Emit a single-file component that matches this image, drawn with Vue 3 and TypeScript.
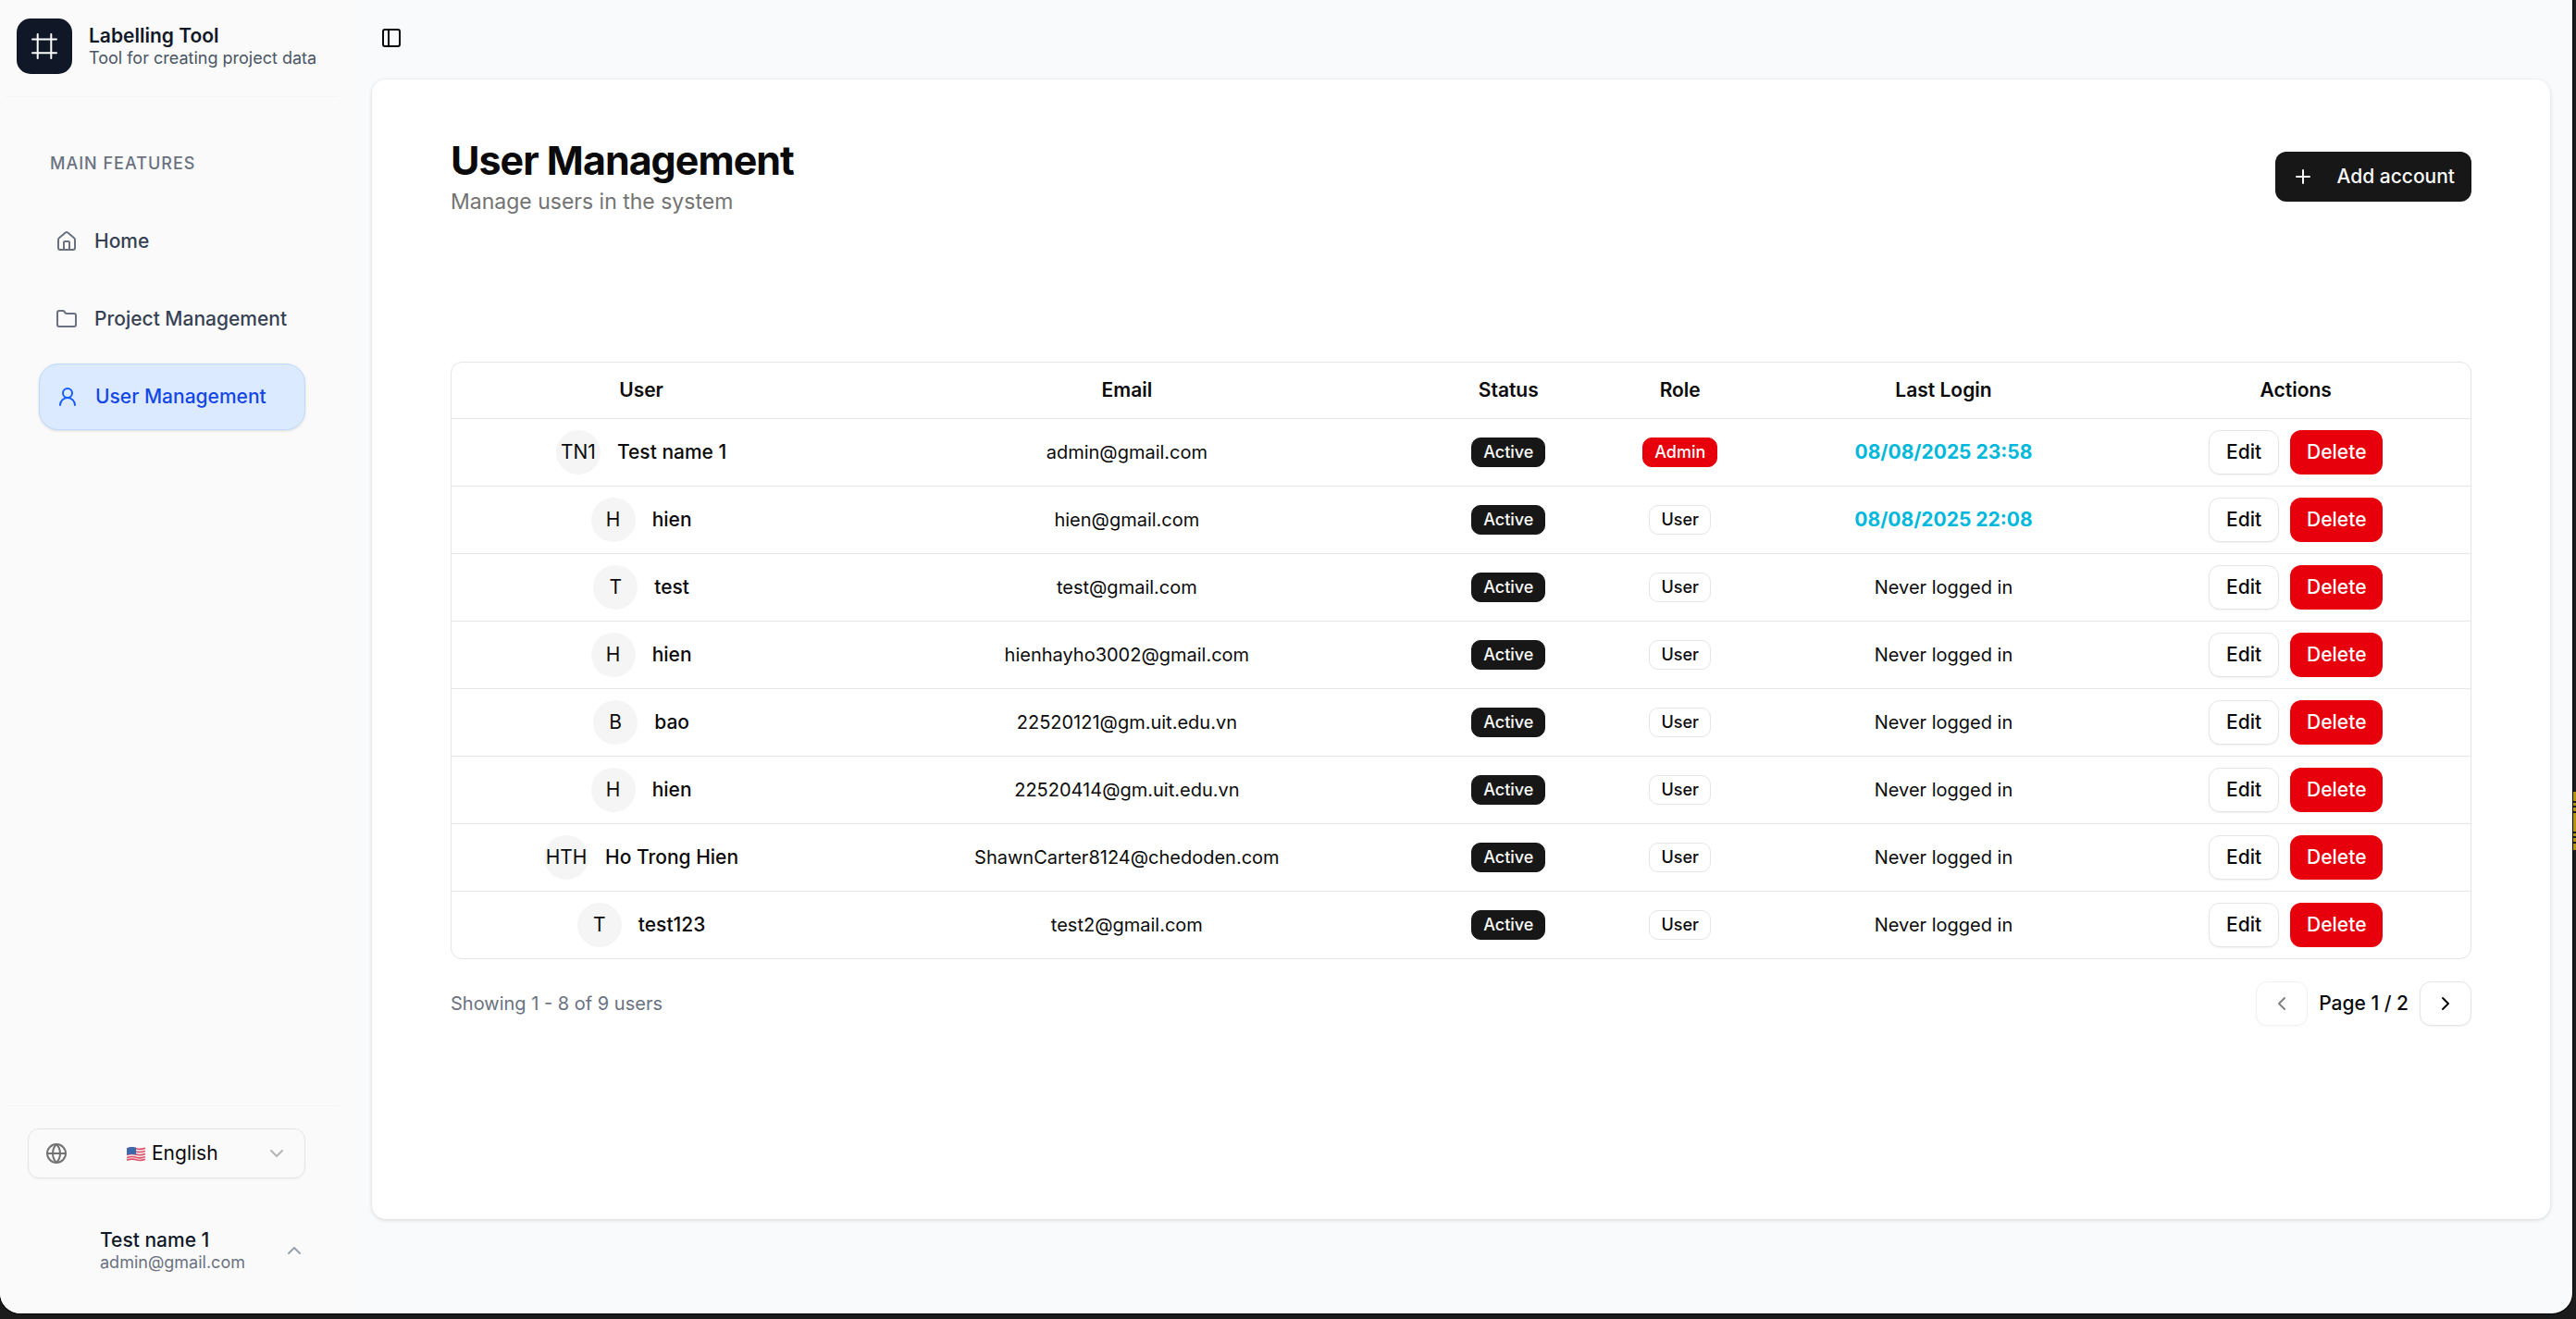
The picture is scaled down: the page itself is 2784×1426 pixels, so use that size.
<script setup lang="ts">
import { ref } from 'vue'

interface User {
  initials: string
  name: string
  email: string
  role: 'Admin' | 'User'
  lastLogin?: string
}

const users: User[] = [
  { initials: 'TN1', name: 'Test name 1', email: 'admin@gmail.com', role: 'Admin', lastLogin: '08/08/2025 23:58' },
  { initials: 'H', name: 'hien', email: 'hien@gmail.com', role: 'User', lastLogin: '08/08/2025 22:08' },
  { initials: 'T', name: 'test', email: 'test@gmail.com', role: 'User' },
  { initials: 'H', name: 'hien', email: 'hienhayho3002@gmail.com', role: 'User' },
  { initials: 'B', name: 'bao', email: '22520121@gm.uit.edu.vn', role: 'User' },
  { initials: 'H', name: 'hien', email: '22520414@gm.uit.edu.vn', role: 'User' },
  { initials: 'HTH', name: 'Ho Trong Hien', email: 'ShawnCarter8124@chedoden.com', role: 'User' },
  { initials: 'T', name: 'test123', email: 'test2@gmail.com', role: 'User' },
]

const columns = [
  { key: 'user', label: 'User' },
  { key: 'email', label: 'Email' },
  { key: 'status', label: 'Status' },
  { key: 'role', label: 'Role' },
  { key: 'login', label: 'Last Login' },
  { key: 'actions', label: 'Actions' },
]

const language = ref('en')
</script>

<template>
  <div class="desktop">
    <div class="edge-marks" aria-hidden="true"></div>
    <div class="window">
      <aside class="sidebar">
        <header class="brand">
          <span class="logo">
            <svg viewBox="0 0 30 30" width="30" height="30" fill="none" stroke="currentColor" stroke-width="2" stroke-linecap="round">
              <path d="M7.700 2v26M22.300 2v26M2 7.500h26M2 22.300h26" />
            </svg>
          </span>
          <div>
            <p class="brand-name">Labelling Tool</p>
            <p class="brand-sub">Tool for creating project data</p>
          </div>
        </header>

        <nav class="nav" aria-label="Main features">
          <h2 class="nav-title">MAIN FEATURES</h2>
          <a class="nav-item" href="#home">
            <svg class="icon" viewBox="0 0 24 24">
              <path d="M15 21v-8a1 1 0 0 0-1-1h-4a1 1 0 0 0-1 1v8" />
              <path d="M3 10a2 2 0 0 1 .709-1.528l7-5.999a2 2 0 0 1 2.582 0l7 5.999A2 2 0 0 1 21 10v9a2 2 0 0 1-2 2H5a2 2 0 0 1-2-2z" />
            </svg>
            Home
          </a>
          <a class="nav-item" href="#projects">
            <svg class="icon" viewBox="0 0 24 24">
              <path d="M20 20a2 2 0 0 0 2-2V8a2 2 0 0 0-2-2h-7.900a2 2 0 0 1-1.690-.900L9.600 3.900A2 2 0 0 0 7.930 3H4a2 2 0 0 0-2 2v13a2 2 0 0 0 2 2Z" />
            </svg>
            Project Management
          </a>
          <a class="nav-item active" href="#users" aria-current="page">
            <svg class="icon" viewBox="0 0 24 24">
              <circle cx="12" cy="8" r="5" />
              <path d="M20 21a8 8 0 0 0-16 0" />
            </svg>
            User Management
          </a>
        </nav>

        <footer class="side-footer">
          <label class="language">
            <svg class="icon globe" viewBox="0 0 24 24">
              <circle cx="12" cy="12" r="10" />
              <path d="M12 2a14.500 14.500 0 0 0 0 20 14.500 14.500 0 0 0 0-20" />
              <path d="M2 12h20" />
            </svg>
            <span class="language-value">
              <svg class="flag" viewBox="0 0 21 16" width="22" height="17" aria-hidden="true">
                <path d="M1 2Q6 0 10.500 1.500T20 1V14Q15 16 10.500 14.500T1 15Z" fill="#f3e9ea" />
                <path d="M1 3Q6 1 10.500 2.500T20 2M1 6Q6 4 10.500 5.500T20 5M1 9Q6 7 10.500 8.500T20 8M1 12Q6 10 10.500 11.500T20 11M1 14.500Q6 12.500 10.500 14T20 13.500" fill="none" stroke="#e0526a" stroke-width="1.500" />
                <path d="M1 2Q6 0 10.500 1.500V9Q6 7.500 1 9Z" fill="#3a68ad" />
              </svg>
              <select v-model="language" aria-label="Language">
                <option value="en">English</option>
              </select>
            </span>
            <svg class="icon chevron" viewBox="0 0 24 24"><path d="m6 9 6 6 6-6" /></svg>
          </label>

          <button class="account" type="button">
            <span class="account-text">
              <span class="account-name">Test name 1</span>
              <span class="account-email">admin@gmail.com</span>
            </span>
            <svg class="icon chevron-up" viewBox="0 0 24 24"><path d="m18 15-6-6-6 6" /></svg>
          </button>
        </footer>
      </aside>

      <div class="content">
        <div class="topbar">
          <button class="toggle" type="button" aria-label="Toggle sidebar">
            <svg class="icon" viewBox="0 0 24 24">
              <rect x="3" y="3" width="18" height="18" rx="2" />
              <path d="M9 3v18" />
            </svg>
          </button>
        </div>

        <main class="card">
          <div class="page-head">
            <div>
              <h1>User Management</h1>
              <p class="subtitle">Manage users in the system</p>
            </div>
            <button class="btn primary" type="button">
              <svg class="icon" viewBox="0 0 24 24"><path d="M5 12h14M12 5v14" /></svg>
              Add account
            </button>
          </div>

          <div class="table-wrap">
            <table>
              <colgroup>
                <col v-for="c in columns" :key="c.key" :class="'col-' + c.key" />
              </colgroup>
              <thead>
                <tr>
                  <th v-for="c in columns" :key="c.key" scope="col">{{ c.label }}</th>
                </tr>
              </thead>
              <tbody>
                <tr v-for="u in users" :key="u.email">
                  <td>
                    <div class="person">
                      <span class="avatar">{{ u.initials }}</span>
                      <span class="person-name">{{ u.name }}</span>
                    </div>
                  </td>
                  <td>{{ u.email }}</td>
                  <td><span class="badge dark">Active</span></td>
                  <td><span class="badge" :class="{ red: u.role === 'Admin' }">{{ u.role }}</span></td>
                  <td>
                    <span v-if="u.lastLogin" class="login">{{ u.lastLogin }}</span>
                    <template v-else>Never logged in</template>
                  </td>
                  <td>
                    <div class="actions">
                      <button class="btn outline" type="button">Edit</button>
                      <button class="btn danger" type="button">Delete</button>
                    </div>
                  </td>
                </tr>
              </tbody>
            </table>
          </div>

          <div class="pager">
            <p class="pager-info">Showing 1 - 8 of 9 users</p>
            <div class="pager-nav">
              <button class="btn outline page-btn" type="button" disabled aria-label="Previous page">
                <svg class="icon" viewBox="0 0 24 24"><path d="m15 18-6-6 6-6" /></svg>
              </button>
              <span>Page 1 / 2</span>
              <button class="btn outline page-btn" type="button" aria-label="Next page">
                <svg class="icon" viewBox="0 0 24 24"><path d="m9 18 6-6-6-6" /></svg>
              </button>
            </div>
          </div>
        </main>
      </div>
    </div>
  </div>
</template>

<style>
body {
  background: #1b1b1b;
}
</style>

<style scoped>
* {
  box-sizing: border-box;
}

h1,
h2,
p {
  margin: 0;
}

button,
select {
  font: inherit;
  color: inherit;
  background: none;
  border: 0;
  padding: 0;
}

.desktop {
  position: relative;
  min-height: 100vh;
  display: flex;
  padding: 0 4px 6px 0;
  background: #1b1b1b;
  font-family: Inter, "Liberation Sans", sans-serif;
  font-size: 21px;
  line-height: 30px;
  color: #0a0a0a;
}

/* Highlight ticks of the editor behind the window */
.edge-marks {
  position: absolute;
  right: 0;
  top: 60%;
  width: 3px;
  height: 63px;
  background: repeating-linear-gradient(#b8960c 0 10px, #1b1b1b 10px 12px, #b8960c 12px 15px, #1b1b1b 15px 17px, #b8960c 17px 21px, #1b1b1b 21px 23px, #b8960c 23px 33px);
}

.window {
  flex: 1;
  min-width: 0;
  display: flex;
  background: #f9fafc;
  border-radius: 0 0 22px 22px;
  box-shadow: 0 0 0 1px #000;
  overflow: hidden;
}

.icon {
  flex: none;
  width: 24px;
  height: 24px;
  fill: none;
  stroke: currentColor;
  stroke-width: 2;
  stroke-linecap: round;
  stroke-linejoin: round;
}

.sidebar {
  flex: none;
  width: 384px;
  padding: 0 18px 0 6px;
  display: flex;
  flex-direction: column;
  background: #fafafa;
}

.brand {
  display: flex;
  align-items: center;
  gap: 18px;
  padding: 20px 12px 24px;
  border-bottom: 1px solid #f3f4f6;
}

.logo {
  flex: none;
  width: 60px;
  height: 60px;
  display: grid;
  place-items: center;
  border-radius: 15px;
  background: #101828;
  color: #fff;
}

.brand-name {
  font-weight: 600;
  line-height: 26px;
  color: #101828;
}

.brand-sub {
  font-size: 18px;
  line-height: 22px;
  color: #4a5565;
}

.nav {
  flex: 1;
  display: flex;
  flex-direction: column;
  gap: 12px;
  padding: 54px 36px 24px;
}

.nav-title {
  padding: 0 12px;
  margin-bottom: 18px;
  font-size: 18px;
  line-height: 36px;
  font-weight: 500;
  letter-spacing: 1px;
  color: #6a7282;
}

.nav-item {
  display: flex;
  align-items: center;
  gap: 18px;
  height: 72px;
  padding: 0 18px;
  border-radius: 21px;
  font-weight: 500;
  color: #364153;
  text-decoration: none;
  white-space: nowrap;
}

.nav-item .icon {
  stroke: #6a7282;
}

.nav-item.active {
  border: 1px solid #bedbff;
  background: #dbeafe;
  color: #1447e6;
  box-shadow: 0 1px 3px rgba(0, 0, 0, 0.12);
}

.nav-item.active .icon {
  stroke: #155dfc;
}

.side-footer {
  border-top: 1px solid #f3f4f6;
  padding: 24px 36px 44px 24px;
}

.language {
  display: flex;
  align-items: center;
  justify-content: space-between;
  height: 54px;
  padding: 0 18px;
  border: 1px solid #e5e5e5;
  border-radius: 12px;
  box-shadow: 0 1px 2px rgba(0, 0, 0, 0.05);
}

.globe {
  color: #737373;
}

.language-value {
  display: flex;
  align-items: center;
  gap: 6px;
  margin-left: 12px;
}

select {
  appearance: none;
}

.chevron {
  color: #b4b4b4;
}

.account {
  width: 100%;
  display: flex;
  align-items: center;
  justify-content: space-between;
  margin-top: 42px;
  padding: 12px 0 0 78px;
  text-align: left;
}

.account-text {
  display: flex;
  flex-direction: column;
}

.account-name {
  font-weight: 500;
  line-height: 26px;
  color: #101828;
}

.account-email {
  font-size: 18px;
  line-height: 22px;
  color: #6a7282;
}

.chevron-up {
  color: #99a1af;
}

.content {
  flex: 1;
  min-width: 0;
  display: flex;
  flex-direction: column;
  padding: 0 24px 102px 18px;
}

.topbar {
  display: flex;
  align-items: center;
  height: 86px;
  padding: 0 9px 4px;
}

.toggle {
  display: flex;
}

.card {
  flex: 1;
  padding: 60px 85px 24px;
  border-radius: 15px;
  background: #fff;
  box-shadow: 0 1px 4px rgba(0, 0, 0, 0.15);
}

.page-head {
  display: flex;
  align-items: center;
  justify-content: space-between;
  margin-bottom: 155px;
}

h1 {
  font-size: 43px;
  line-height: 54px;
  font-weight: 700;
  letter-spacing: -1px;
}

.subtitle {
  font-size: 23px;
  line-height: 36px;
  color: #737373;
}

.btn {
  display: inline-flex;
  align-items: center;
  justify-content: center;
  height: 48px;
  padding: 0 18px;
  border-radius: 12px;
  font-size: 21px;
  font-weight: 500;
  white-space: nowrap;
}

.primary {
  height: 54px;
  gap: 24px;
  background: #171717;
  color: #fafafa;
}

.outline {
  border: 1px solid #e5e5e5;
  background: #fff;
  box-shadow: 0 1px 2px rgba(0, 0, 0, 0.06);
}

.danger {
  background: #e7000b;
  color: #fff;
}

.table-wrap {
  border: 1px solid #e5e5e5;
  border-radius: 12px;
  overflow: hidden;
}

table {
  width: 100%;
  table-layout: fixed;
  border-collapse: separate;
  border-spacing: 0;
}

.col-user {
  width: 18.8%;
}

.col-email {
  width: 29.3%;
}

.col-status,
.col-role {
  width: 8.5%;
}

.col-login {
  width: 17.6%;
}

.col-actions {
  width: 17.3%;
}

th,
td {
  padding: 0 12px;
  text-align: center;
  vertical-align: middle;
  border-bottom: 1px solid #e5e5e5;
}

th {
  height: 61px;
  font-weight: 600;
}

td {
  height: 73px;
  font-size: 20px;
}

tbody tr:last-child td {
  height: 72px;
  border-bottom: 0;
}

.person,
.actions {
  display: flex;
  align-items: center;
  justify-content: center;
}

.person {
  gap: 18px;
  font-size: 21px;
}

.actions {
  gap: 12px;
}

.avatar {
  flex: none;
  width: 48px;
  height: 48px;
  display: flex;
  align-items: center;
  justify-content: center;
  border-radius: 50%;
  background: #f5f5f5;
}

.person-name {
  font-weight: 500;
}

.badge {
  display: inline-block;
  padding: 3px 12px;
  border: 1px solid #e5e5e5;
  border-radius: 10px;
  font-size: 18px;
  line-height: 24px;
  font-weight: 500;
  vertical-align: middle;
}

.badge.dark {
  border-color: #171717;
  background: #171717;
  color: #fafafa;
}

.badge.red {
  border-color: #e7000b;
  background: #e7000b;
  color: #fff;
}

.login {
  font-size: 21px;
  font-weight: 700;
  color: #00b8db;
}

.pager {
  display: flex;
  align-items: center;
  justify-content: space-between;
  margin-top: 24px;
}

.pager-info {
  font-size: 20px;
  color: #6a7282;
}

.pager-nav {
  display: flex;
  align-items: center;
  gap: 12px;
  font-weight: 500;
}

.page-btn {
  width: 56px;
  padding: 0;
}

.page-btn:disabled {
  opacity: 0.5;
}
</style>
